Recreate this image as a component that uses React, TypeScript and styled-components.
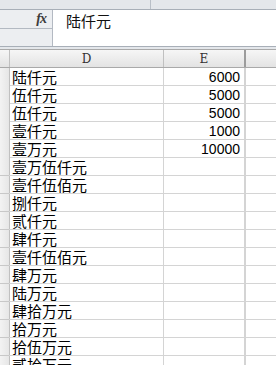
import styled, { createGlobalStyle } from "styled-components";

const GlobalStyle = createGlobalStyle`
  html, body {
    margin: 0;
    padding: 0;
    background: #ffffff;
  }
  body {
    width: 276px;
    height: 365px;
    overflow: hidden;
    font-family: "Noto Sans CJK SC", "Liberation Sans", sans-serif;
  }
`;

const rows: { d: string; e?: number }[] = [
  { d: "陆仟元", e: 6000 },
  { d: "伍仟元", e: 5000 },
  { d: "伍仟元", e: 5000 },
  { d: "壹仟元", e: 1000 },
  { d: "壹万元", e: 10000 },
  { d: "壹万伍仟元" },
  { d: "壹仟伍佰元" },
  { d: "捌仟元" },
  { d: "贰仟元" },
  { d: "肆仟元" },
  { d: "壹仟伍佰元" },
  { d: "肆万元" },
  { d: "陆万元" },
  { d: "肆拾万元" },
  { d: "拾万元" },
  { d: "拾伍万元" },
  { d: "贰拾万元" },
];

const COLS = "9px 1px 153px 1px 80px 2px 1fr";

function App() {
  return (
    <Sheet>
      <GlobalStyle />
      <TopStrip>
        <StripDivider />
      </TopStrip>
      <FormulaBar>
        <NameArea>
          <NameTop>
            <Fx>fx</Fx>
          </NameTop>
          <NameBottom />
        </NameArea>
        <FormulaInput>陆仟元</FormulaInput>
      </FormulaBar>
      <Gap />
      <HeaderRow>
        <HeaderCell />
        <VLine $tone="header" />
        <HeaderCell>D</HeaderCell>
        <VLine $tone="header" />
        <HeaderCell>E</HeaderCell>
        <VLine $tone="strong" />
        <HeaderCell />
      </HeaderRow>
      {rows.map((r, i) => (
        <Row key={i}>
          <RowNum />
          <VLine $tone="header" />
          <TextCell>{r.d}</TextCell>
          <VLine $tone="grid" />
          <NumCell>{r.e ?? ""}</NumCell>
          <VLine $tone="grid" />
          <TextCell />
        </Row>
      ))}
    </Sheet>
  );
}

export default App;

const Sheet = styled.div`
  display: flex;
  flex-direction: column;
  width: 276px;
  height: 365px;
  overflow: hidden;
`;

const TopStrip = styled.div`
  height: 9px;
  background: #e4e7eb;
  border-bottom: 1px solid #a8afb8;
  position: relative;
  flex: none;
`;

const StripDivider = styled.div`
  position: absolute;
  left: 150px;
  top: 0;
  width: 1px;
  height: 9px;
  background: #b9bfc7;
`;

const FormulaBar = styled.div`
  display: flex;
  height: 36px;
  border-bottom: 1px solid #a8afb8;
  flex: none;
`;

const NameArea = styled.div`
  width: 52px;
  display: flex;
  flex-direction: column;
  background: #eceef1;
  border-right: 1px solid #b3b9c2;
`;

const NameTop = styled.div`
  height: 18px;
  border-bottom: 1px solid #b3b9c2;
  display: flex;
  justify-content: flex-end;
  align-items: center;
  padding-right: 6px;
`;

const NameBottom = styled.div`
  flex: 1;
`;

const Fx = styled.span`
  font-family: "Liberation Serif", serif;
  font-style: italic;
  font-weight: bold;
  font-size: 14px;
  line-height: 14px;
  color: #3c3c3c;
  letter-spacing: -1px;
`;

const FormulaInput = styled.div`
  flex: 1;
  background: #ffffff;
  padding: 1px 0 0 13px;
  font-size: 15px;
  line-height: 20px;
  color: #111;
`;

const Gap = styled.div`
  height: 2px;
  background: #e4e7eb;
  flex: none;
`;

const HeaderRow = styled.div`
  display: grid;
  grid-template-columns: ${COLS};
  height: 17px;
  border-top: 1px solid #a9a9a9;
  border-bottom: 1px solid #a9a9a9;
  background: linear-gradient(#f6f6f6, #e3e3e3);
  flex: none;
`;

const HeaderCell = styled.div`
  display: flex;
  align-items: center;
  justify-content: center;
  font-family: "DejaVu Serif", "Liberation Serif", serif;
  font-size: 12px;
  color: #333;
`;

const VLine = styled.div<{ $tone: "header" | "grid" | "strong" }>`
  background: ${(p) =>
    p.$tone === "strong" ? "#9c9c9c" : p.$tone === "header" ? "#c0c0c0" : "#d4d4d4"};
`;

const Row = styled.div`
  display: grid;
  grid-template-columns: ${COLS};
  height: 17px;
  border-bottom: 1px solid #d4d4d4;
  flex: none;
`;

const RowNum = styled.div`
  background: linear-gradient(90deg, #f3f3f3, #e6e6e6);
  border-bottom: 1px solid #c8c8c8;
  margin-bottom: -1px;
`;

const TextCell = styled.div`
  padding-left: 2px;
  font-size: 15px;
  line-height: 17px;
  color: #000;
  white-space: nowrap;
`;

const NumCell = styled.div`
  padding-right: 4px;
  text-align: right;
  font-family: "Liberation Sans", sans-serif;
  font-size: 14px;
  line-height: 18px;
  color: #000;
  white-space: nowrap;
`;
